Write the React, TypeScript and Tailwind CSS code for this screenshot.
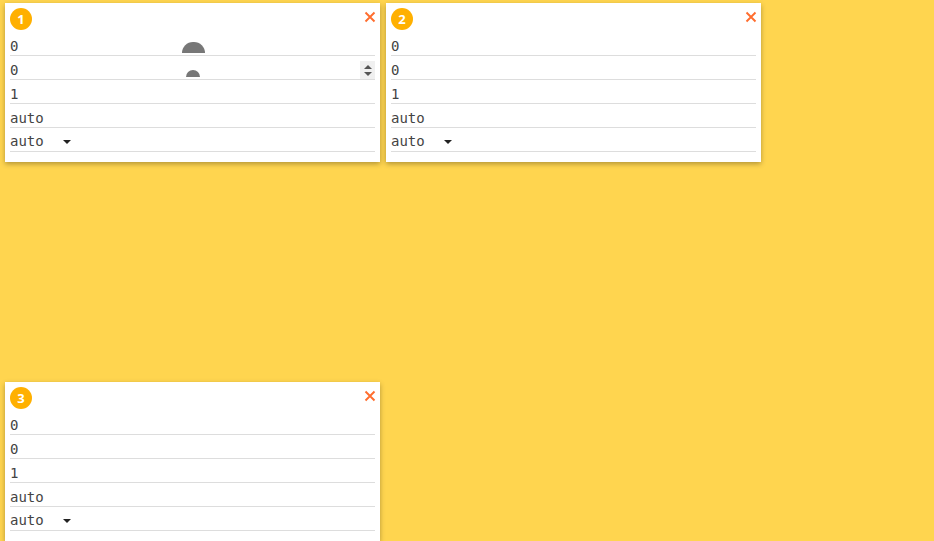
const rows = ['0', '0', '1', 'auto'];

function Card({ index, spinner }: { index: number; spinner?: boolean }) {
  return (
    <div className="relative w-[375px] self-start bg-white px-[5px] pt-[5px] pb-[10px] shadow-[0_2px_5px_rgba(0,0,0,0.3)]">
      <div className="flex h-[24px] items-start justify-between">
        <div className="flex h-[22px] w-[22px] items-center justify-center rounded-full bg-[#ffb000] pt-[2px] font-['Open_Sans',sans-serif] text-[13px] font-bold text-white">
          {index}
        </div>
        <svg width="12" height="12" viewBox="0 0 12 12" className="mt-[3px] mr-[-0.5px]">
          <path d="M1.5 1.5 L10.5 10.5 M10.5 1.5 L1.5 10.5" stroke="#ff6d2e" strokeWidth="1.9" fill="none" />
        </svg>
      </div>
      {rows.map((v, i) => (
        <div
          key={i}
          className="relative flex h-[24px] items-center border-b border-[#dddddd] pt-[5px] font-['DejaVu_Sans_Mono',monospace] text-[14px] text-[#444444]"
        >
          {v}
          {spinner && i === 1 && (
            <div className="absolute top-[5px] right-0 flex h-[18px] w-[15px] flex-col items-center justify-center gap-[3px] bg-[#f0f0f0]">
              <div className="h-0 w-0 border-x-[4px] border-b-[4px] border-x-transparent border-b-[#555555]" />
              <div className="h-0 w-0 border-x-[4px] border-t-[4px] border-x-transparent border-t-[#555555]" />
            </div>
          )}
        </div>
      ))}
      <div className="flex h-[24px] items-center gap-[19px] border-b border-[#dddddd] pt-[3px] font-['DejaVu_Sans_Mono',monospace] text-[14px] text-[#444444]">
        auto
        <div className="mt-[1px] h-0 w-0 border-x-[4px] border-t-[4px] border-x-transparent border-t-[#222222]" />
      </div>
      {spinner && (
        <>
          <div className="absolute top-[39px] left-[177px] h-[11px] w-[23px] rounded-t-full bg-[#777777]" />
          <div className="absolute top-[67px] left-[181px] h-[7px] w-[14px] rounded-t-full bg-[#777777]" />
        </>
      )}
    </div>
  );
}

export default function App() {
  return (
    <div className="h-screen overflow-hidden bg-[#ffd54f]">
      <div className="grid grid-cols-[375px_375px] auto-rows-[379px] gap-x-[6px] pt-[3px] pl-[5px]">
        <Card index={1} spinner />
        <Card index={2} />
        <Card index={3} />
      </div>
    </div>
  );
}
